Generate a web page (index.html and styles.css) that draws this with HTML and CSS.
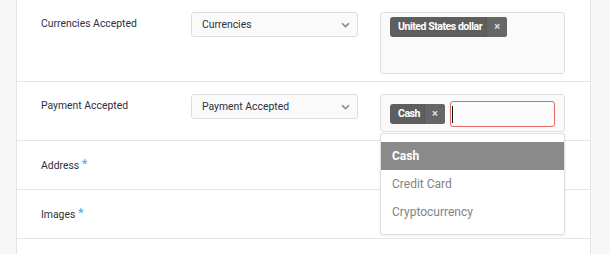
FILE: index.html
```html
<!DOCTYPE html>
<html>
<head>
<meta charset="utf-8">
<link rel="stylesheet" href="styles.css">
</head>
<body>
<div class="page">
  <div class="panel">
    <div class="row row-currencies">
      <div class="label">Currencies Accepted</div>
      <div class="select">
        <span>Currencies</span>
        <svg class="chev" width="9" height="6" viewBox="0 0 9 6"><path d="M1 1.2 L4.5 4.6 L8 1.2" fill="none" stroke="#8a8a8a" stroke-width="1.6"/></svg>
      </div>
      <div class="multi multi-tall">
        <span class="tag"><span class="tag-text">United States dollar</span><span class="tag-x">×</span></span>
      </div>
    </div>
    <div class="row row-payment">
      <div class="label">Payment Accepted</div>
      <div class="select">
        <span>Payment Accepted</span>
        <svg class="chev" width="9" height="6" viewBox="0 0 9 6"><path d="M1 1.2 L4.5 4.6 L8 1.2" fill="none" stroke="#8a8a8a" stroke-width="1.6"/></svg>
      </div>
      <div class="multi-wrap">
        <div class="multi multi-open">
          <span class="tag"><span class="tag-text">Cash</span><span class="tag-x">×</span></span>
          <span class="search"><span class="caret"></span></span>
        </div>
        <ul class="dropdown">
          <li class="opt active">Cash</li>
          <li class="opt">Credit Card</li>
          <li class="opt">Cryptocurrency</li>
        </ul>
      </div>
    </div>
    <div class="row row-short">
      <div class="label">Address <span class="req">*</span></div>
    </div>
    <div class="row row-short">
      <div class="label">Images <span class="req">*</span></div>
    </div>
  </div>
</div>
</body>
</html>
```

FILE: styles.css
```css
html, body {
  margin: 0;
  padding: 0;
  background: #f7f7f7;
  font-family: Roboto, "Liberation Sans", sans-serif;
}
.page {
  width: 610px;
  height: 254px;
  overflow: hidden;
}
.panel {
  margin-left: 16px;
  width: 573px;
  height: 254px;
  background: #fff;
  border-left: 1px solid #e4e4e4;
  border-right: 1px solid #e4e4e4;
}
.row {
  display: flex;
  align-items: flex-start;
  box-sizing: border-box;
  padding: 12px 0 0 24px;
  border-bottom: 1px solid #e6e6e6;
}
.row-currencies { height: 82px; }
.row-payment { height: 59px; }
.row-short { height: 49px; }
.label {
  width: 150px;
  height: 25px;
  line-height: 23px;
  font-size: 10.4px;
  color: #2c3140;
}
.req {
  color: #49a9e6;
  font-size: 13px;
  position: relative;
  top: -1px;
}
.select {
  box-sizing: border-box;
  width: 167px;
  height: 25px;
  margin-right: 22px;
  border: 1px solid #dedede;
  border-radius: 3px;
  background: #fafafa;
  display: flex;
  align-items: center;
  justify-content: space-between;
  padding: 0 7px 0 10px;
  font-size: 10.4px;
  color: #2c3140;
}
.chev { margin-top: 1px; }
.multi {
  box-sizing: border-box;
  width: 185px;
  border: 1px solid #dedede;
  border-radius: 3px;
  background: #fafafa;
  display: flex;
  align-items: center;
  padding: 0 9px;
}
.multi-tall {
  height: 62px;
  align-items: flex-start;
  padding-top: 4px;
}
.multi-open {
  height: 38px;
  padding-top: 6px;
  padding-bottom: 5px;
  align-items: flex-start;
}
.multi-wrap {
  position: relative;
}
.tag {
  display: inline-flex;
  height: 20px;
  border-radius: 3px;
  background: #5e5e5e;
  color: #fff;
  font-size: 10.5px;
  font-weight: 700;
  letter-spacing: -0.45px;
  line-height: 20px;
  overflow: hidden;
}
.multi-open .tag { margin-top: 3px; }
.tag-text { padding: 0 4px 0 8px; }
.tag-x {
  width: 20px;
  text-align: center;
  background: #666;
  border-left: 1px solid #585858;
  color: #e0e0e0;
  font-size: 11px;
  letter-spacing: 0;
}
.search {
  box-sizing: border-box;
  width: 105px;
  height: 26px;
  margin-left: 5px;
  border: 1px solid #e06a66;
  border-radius: 3px;
  background: #fcfcfc;
  display: flex;
  align-items: center;
  padding-left: 1px;
}
.caret {
  width: 1.5px;
  height: 17px;
  background: #111;
}
.dropdown {
  position: absolute;
  left: 0;
  top: 39px;
  box-sizing: border-box;
  width: 185px;
  height: 102px;
  margin: 0;
  padding: 8px 0;
  list-style: none;
  background: #fff;
  border: 1px solid #dedede;
  border-radius: 3px;
  box-shadow: 0 1px 3px rgba(0,0,0,0.08);
}
.opt {
  height: 28px;
  line-height: 28px;
  padding-left: 11px;
  font-size: 12px;
  color: #838383;
}
.opt.active {
  background: #8a8a8a;
  color: #fff;
  font-weight: 700;
}
```
